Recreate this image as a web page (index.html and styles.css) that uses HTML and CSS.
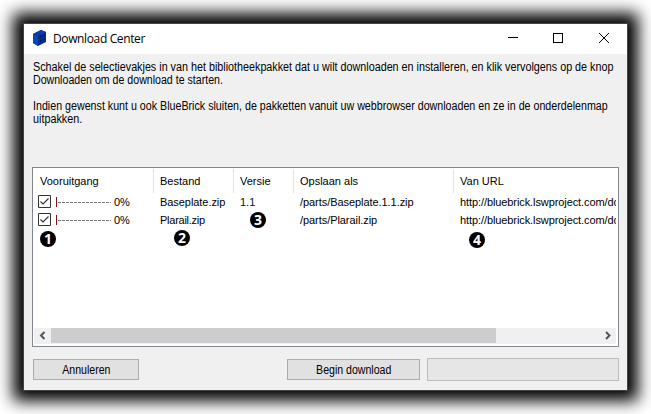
FILE: index.html
```html
<!DOCTYPE html>
<html lang="nl">
<head>
<meta charset="utf-8">
<title>Download Center</title>
<link rel="stylesheet" href="styles.css">
</head>
<body>
<main class="window">
  <header class="titlebar">
    <svg class="logo" width="14" height="16" viewBox="0 0 14 16">
      <path d="M0 4 L8 0 L13 2 V12 L5 16 L0 13Z" fill="#0b2c94"/>
      <path d="M0 4 L5 6 V16 L0 13Z" fill="#0646bd"/>
      <path d="M0 4 L8 0 L13 2 L5 6Z" fill="#0a3cab"/>
      <path d="M7 6 L9 5 V7 L7 8Z M10 5 L12 4 V6 L10 7Z M7 10 L9 9 V11 L7 12Z M10 9 L12 8 V10 L10 11Z" fill="#061c66"/>
    </svg>
    <h1 class="title">Download Center</h1>
    <svg class="controls" width="102" height="10" viewBox="0 0 102 10" fill="none" stroke="#000">
      <path d="M0 4.5H10M45.5 .5H54.5V9.5H45.5Z" shape-rendering="crispEdges"/>
      <path d="M91 0L101 10M101 0L91 10"/>
    </svg>
  </header>
  <section class="intro">
    <p><span class="l1">Schakel de selectievakjes in van het bibliotheekpakket dat u wilt downloaden en installeren, en klik vervolgens op de knop</span><br><span class="l2">Downloaden om de download te starten.</span></p>
    <p><span class="l3">Indien gewenst kunt u ook BlueBrick sluiten, de pakketten vanuit uw webbrowser downloaden en ze in de onderdelenmap</span><br><span class="l4">uitpakken.</span></p>
  </section>
  <section class="list">
    <div class="row head">
      <div class="cell w">Vooruitgang</div><div class="cell">Bestand</div><div class="cell">Versie</div><div class="cell">Opslaan als</div><div class="cell">Van URL</div>
    </div>
    <div class="row">
      <div class="cell progress">
        <svg class="check" width="13" height="13" viewBox="0 0 13 13" fill="none"><path d="M.5 .5H12.5V12.5H.5Z" stroke="#333"/><path d="M2.5 6.5L5 9L10.5 3.5" stroke="#333" stroke-width="1.2"/></svg>
        <svg class="meter" width="55" height="10" viewBox="0 0 55 10" shape-rendering="crispEdges"><path d="M.5 0V10" stroke="#7c1420"/><path d="M1.500 5.500H55" stroke="#777" stroke-dasharray="3 1" fill="none"/></svg>
        <span>0%</span>
      </div>
      <div class="cell file">Baseplate.zip</div><div class="cell version">1.1</div><div class="cell path">/parts/Baseplate.1.1.zip</div><div class="cell url">http://bluebrick.lswproject.com/do</div>
    </div>
    <div class="row">
      <div class="cell progress">
        <svg class="check" width="13" height="13" viewBox="0 0 13 13" fill="none"><path d="M.5 .5H12.5V12.5H.5Z" stroke="#333"/><path d="M2.5 6.5L5 9L10.5 3.5" stroke="#333" stroke-width="1.2"/></svg>
        <svg class="meter" width="55" height="10" viewBox="0 0 55 10" shape-rendering="crispEdges"><path d="M.5 0V10" stroke="#7c1420"/><path d="M1.500 5.500H55" stroke="#777" stroke-dasharray="3 1" fill="none"/></svg>
        <span>0%</span>
      </div>
      <div class="cell short">Plarail.zip</div><div class="cell"></div><div class="cell path">/parts/Plarail.zip</div><div class="cell url">http://bluebrick.lswproject.com/do</div>
    </div>
    <div class="scrollbar">
      <svg class="arrow" width="17" height="15" viewBox="0 0 17 15" fill="none" stroke="#555" stroke-width="2"><path d="M10.500 4L7 7.500L10.500 11"/></svg>
      <div class="thumb"></div>
      <svg class="arrow right" width="17" height="15" viewBox="0 0 17 15" fill="none" stroke="#555" stroke-width="2"><path d="M7 4L10.500 7.500L7 11"/></svg>
    </div>
    <b class="badge one">1</b><b class="badge two">2</b><b class="badge three">3</b><b class="badge four">4</b>
  </section>
  <footer class="actions">
    <button class="cancel"><span>Annuleren</span></button>
    <button class="begin"><span>Begin download</span></button>
    <div class="total"></div>
  </footer>
</main>
</body>
</html>
```
FILE: styles.css
```css
* { box-sizing: border-box; }
body { margin: 0; padding: 24px; background: #fff; height: 414px; overflow: hidden; font: 12px/13px "Liberation Sans", Arial, sans-serif; color: #000; }
.window { width: 603px; height: 366px; background: #f0f0f0; box-shadow: 0 0 0 1px #444, 0 0 15px 11px #000; display: flex; flex-direction: column; }
.titlebar { height: 30px; background: #fff; display: flex; align-items: center; padding: 0 17px 0 9px; }
.logo { margin-top: -2px; }
.title { margin: 0 0 0 6px; font: 12px/16px "Open Sans", "Noto Sans", sans-serif; letter-spacing: -.37px; flex: 1; }
.controls { margin-top: -2px; overflow: visible; }
.intro { height: 113px; padding: 7px 0 0 9px; white-space: nowrap; }
.intro p { margin: 0 0 13px; }
.intro span { display: inline-block; vertical-align: top; transform-origin: left; }
.l1 { transform: scaleX(.897); }
.l2 { transform: scaleX(.884); }
.l3 { transform: scaleX(.89); }
.l4 { transform: scaleX(.9); }
.list { position: relative; width: 587px; height: 180px; margin-left: 8px; border: 1px solid #828790; background: #fff; padding: 1px; display: flex; flex-direction: column; font-size: 11px; }
.row { display: grid; grid-template-columns: 120px 80px 60px 160px 1fr; height: 18px; padding-right: 1px; }
.head { height: 24px; margin-bottom: 1px; }
.cell { padding-left: 6px; line-height: 17px; white-space: nowrap; overflow: hidden; }
.head .cell { line-height: 25px; border-right: 1px solid #e2e2e2; }
.head .cell:last-child { border: 0; }
.progress { display: flex; padding-left: 4px; }
.check { margin-top: 1px; }
.meter { margin: 3px 3px 0 5px; }
.file, .path { letter-spacing: -.06px; }
.short { letter-spacing: -.25px; }
.url { letter-spacing: -.09px; }
.version { color: #001a12; }
.scrollbar { margin-top: auto; margin-bottom: 1px; height: 16px; background: #f0f0f0; display: flex; margin-right: 1px; }
.thumb { width: 445px; height: 15px; background: #cdcdcd; }
.right { margin-left: auto; }
.badge { position: absolute; width: 16px; height: 16px; border-radius: 50%; background: #000; color: #fff; font: bold 14px/16px "Open Sans", sans-serif; text-align: center; }
.one { left: 7px; top: 63px; }
.two { left: 141px; top: 62px; }
.three { left: 217px; top: 44px; }
.four { left: 436px; top: 64px; }
.actions { display: flex; align-items: center; padding: 11px 8px 0 9px; }
button { height: 21px; padding: 2px 0 0; border: 1px solid #adadad; background: #e1e1e1; font: inherit; color: #000; }
button span { display: inline-block; transform: scaleX(.88); }
.cancel { width: 106px; }
.begin { width: 133px; margin-left: 148px; }
.total { width: 192px; height: 23px; margin-left: 7px; border: 1px solid #bcbcbc; background: #e6e6e6; }
```
